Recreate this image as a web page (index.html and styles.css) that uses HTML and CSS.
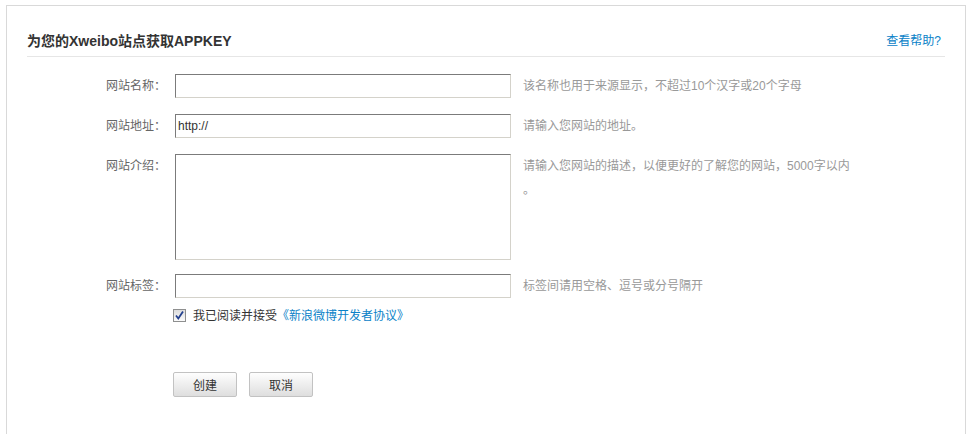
FILE: index.html
```html
<!DOCTYPE html>
<html lang="zh-CN">
<head>
<meta charset="utf-8">
<title>获取APPKEY</title>
<link rel="stylesheet" href="styles.css">
</head>
<body>
<div class="page">
  <div class="panel">
    <div class="panel-head">
      <h2 class="panel-title">为您的Xweibo站点获取APPKEY</h2>
      <a class="help-link" href="#">查看帮助?</a>
    </div>
    <form class="app-form">
      <div class="form-row">
        <label class="form-label">网站名称：</label>
        <input class="text-input" type="text">
        <span class="form-hint">该名称也用于来源显示，不超过10个汉字或20个字母</span>
      </div>
      <div class="form-row">
        <label class="form-label">网站地址：</label>
        <input class="text-input" type="text" value="http://">
        <span class="form-hint">请输入您网站的地址。</span>
      </div>
      <div class="form-row form-row-top">
        <label class="form-label">网站介绍：</label>
        <textarea class="text-area"></textarea>
        <span class="form-hint form-hint-wrap">请输入您网站的描述，以便更好的了解您的网站，5000字以内。</span>
      </div>
      <div class="form-row form-row-last">
        <label class="form-label">网站标签：</label>
        <input class="text-input" type="text">
        <span class="form-hint">标签间请用空格、逗号或分号隔开</span>
      </div>
      <div class="agree-row">
        <span class="check-box">
          <svg width="13" height="13" viewBox="0 0 13 13">
            <path d="M3 6.5 L5.3 9.5 L10 2.5" fill="none" stroke="#23408e" stroke-width="1.8"/>
          </svg>
        </span>
        <span class="agree-text">我已阅读并接受<a class="agree-link" href="#">《新浪微博开发者协议》</a></span>
      </div>
      <div class="btn-row">
        <button class="btn" type="button">创建</button>
        <button class="btn" type="button">取消</button>
      </div>
    </form>
  </div>
</div>
</body>
</html>
```
FILE: styles.css
```css
html, body {
  margin: 0;
  padding: 0;
  background: #fff;
}

body {
  font-family: "Liberation Sans", "Noto Sans CJK SC", sans-serif;
  font-size: 12px;
  color: #333;
}

.page {
  padding: 5px 0 0 6px;
}

.panel {
  box-sizing: border-box;
  width: 960px;
  height: 520px;
  border: 1px solid #d9d9d9;
  padding: 0 20px;
}

.panel-head {
  display: flex;
  justify-content: space-between;
  align-items: center;
  padding: 25px 0 5px;
  border-bottom: 1px solid #e6e6e6;
}

.panel-title {
  margin: 0;
  font-size: 14px;
  line-height: 20px;
  font-weight: bold;
  color: #333;
}

.help-link {
  font-size: 12px;
  line-height: 20px;
  color: #0a82c8;
  text-decoration: none;
  margin-right: 4px;
}

.app-form {
  padding-top: 17px;
}

.form-row {
  display: flex;
  align-items: center;
  margin-bottom: 16px;
}

.form-row-top {
  align-items: flex-start;
  margin-bottom: 14px;
}

.form-row-last {
  margin-bottom: 0;
}

.form-label {
  width: 139px;
  text-align: right;
  color: #666;
  line-height: 24px;
  margin-right: 9px;
  flex: none;
}

.text-input,
.text-area {
  box-sizing: border-box;
  width: 336px;
  margin: 0;
  border: 1px solid #d4d2ca;
  border-top-color: #7b7b7b;
  border-left-color: #7b7b7b;
  background: #fff;
  font-family: "Liberation Sans", "Noto Sans CJK SC", sans-serif;
  font-size: 12px;
  color: #333;
  outline: none;
  flex: none;
}

.text-input {
  height: 24px;
  padding: 0 2px;
}

.text-area {
  height: 106px;
  padding: 2px;
  resize: none;
}

.form-hint {
  margin-left: 12px;
  color: #999;
  line-height: 24px;
}

.form-hint-wrap {
  width: 334px;
  line-break: anywhere;
}

.agree-row {
  display: flex;
  align-items: center;
  height: 13px;
  margin-top: 11px;
  padding-left: 146px;
}

.check-box {
  box-sizing: border-box;
  width: 13px;
  height: 13px;
  border: 1px solid #8e8f8f;
  background: linear-gradient(#dcdcdc, #fbfbfb);
  display: flex;
  flex: none;
}

.check-box svg {
  margin: -1px;
}

.agree-text {
  margin-left: 7px;
  color: #333;
  line-height: 16px;
}

.agree-link {
  color: #0a82c8;
  text-decoration: none;
}

.btn-row {
  display: flex;
  gap: 12px;
  margin-top: 50px;
  padding-left: 146px;
}

.btn {
  box-sizing: border-box;
  width: 64px;
  height: 25px;
  padding: 0;
  border: 1px solid #c2c2c2;
  border-radius: 2px;
  background: linear-gradient(#fefefe, #dedede);
  font-family: "Liberation Sans", "Noto Sans CJK SC", sans-serif;
  font-size: 12px;
  color: #333;
  cursor: pointer;
}
```
